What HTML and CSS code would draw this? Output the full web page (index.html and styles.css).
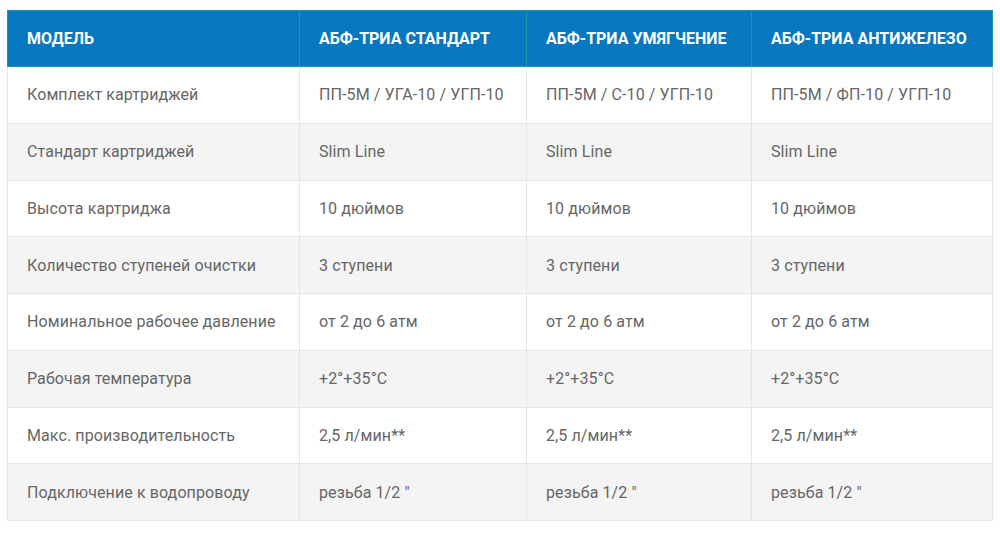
FILE: index.html
```html
<!DOCTYPE html>
<html lang="ru">
<head>
<meta charset="utf-8">
<link rel="stylesheet" href="styles.css">
</head>
<body>
<table class="spec">
  <colgroup>
    <col class="c1"><col class="c2"><col class="c3"><col class="c4">
  </colgroup>
  <thead>
    <tr>
      <th>Модель</th>
      <th>АБФ-ТРИА Стандарт</th>
      <th>АБФ-ТРИА Умягчение</th>
      <th>АБФ-ТРИА Антижелезо</th>
    </tr>
  </thead>
  <tbody>
    <tr><td>Комплект картриджей</td><td>ПП-5М / УГА-10 / УГП-10</td><td>ПП-5М / С-10 / УГП-10</td><td>ПП-5М / ФП-10 / УГП-10</td></tr>
    <tr><td>Стандарт картриджей</td><td>Slim Line</td><td>Slim Line</td><td>Slim Line</td></tr>
    <tr><td>Высота картриджа</td><td>10 дюймов</td><td>10 дюймов</td><td>10 дюймов</td></tr>
    <tr><td>Количество ступеней очистки</td><td>3 ступени</td><td>3 ступени</td><td>3 ступени</td></tr>
    <tr><td>Номинальное рабочее давление</td><td>от 2 до 6 атм</td><td>от 2 до 6 атм</td><td>от 2 до 6 атм</td></tr>
    <tr><td>Рабочая температура</td><td>+2°+35°С</td><td>+2°+35°С</td><td>+2°+35°С</td></tr>
    <tr><td>Макс. производительность</td><td>2,5 л/мин**</td><td>2,5 л/мин**</td><td>2,5 л/мин**</td></tr>
    <tr><td>Подключение к водопроводу</td><td>резьба 1/2 "</td><td>резьба 1/2 "</td><td>резьба 1/2 "</td></tr>
  </tbody>
</table>
</body>
</html>
```
FILE: styles.css
```css
html, body {
  margin: 0;
  background: #ffffff;
}
body {
  padding: 10px 8px 0 7px;
  font-family: Roboto, "Liberation Sans", sans-serif;
}
.spec {
  width: 985px;
  border-collapse: collapse;
  table-layout: fixed;
}
.c1 { width: 292px; }
.c2 { width: 227px; }
.c3 { width: 225px; }
.c4 { width: 241px; }
.spec th {
  background: #0678c0;
  color: #ffffff;
  font-weight: 700;
  font-size: 16px;
  text-transform: uppercase;
  text-align: left;
  height: 56px;
  padding: 0 19px;
  border: 1px solid #1c98a4;
  box-sizing: border-box;
  white-space: nowrap;
}
.spec td {
  color: #666666;
  font-size: 16px;
  letter-spacing: 0.1px;
  height: 56.75px;
  padding: 0 19px;
  border: 1px solid #e6e6e6;
  box-sizing: border-box;
  white-space: nowrap;
}
.spec tbody tr:nth-child(even) td {
  background: #f4f4f4;
}
```
